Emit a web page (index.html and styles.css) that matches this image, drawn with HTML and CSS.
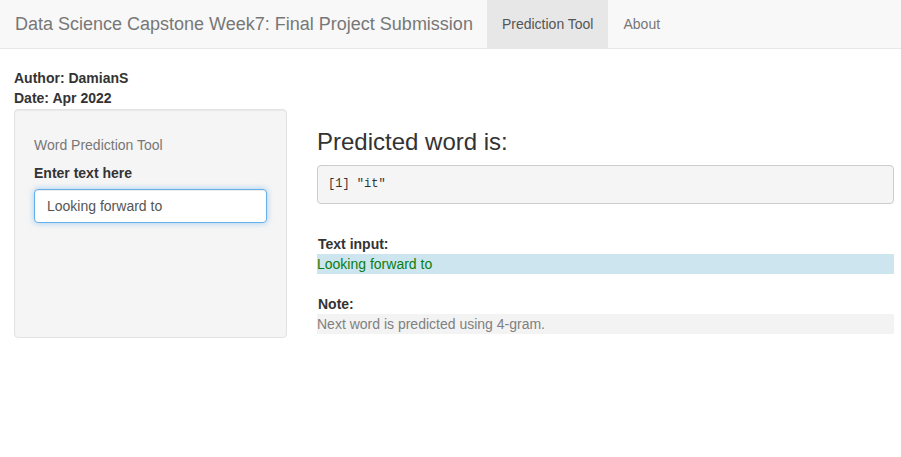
FILE: index.html
```html
<!DOCTYPE html>
<html>
<head>
<meta charset="utf-8">
<title>Data Science Capstone Week7</title>
<link rel="stylesheet" href="styles.css">
</head>
<body>
<nav class="navbar">
  <div class="brand">Data Science Capstone Week7: Final Project Submission</div>
  <ul class="nav">
    <li class="nav-item active">Prediction Tool</li>
    <li class="nav-item">About</li>
  </ul>
</nav>
<div class="page">
  <div class="meta">
    <div class="meta-line">Author: DamianS</div>
    <div class="meta-line">Date: Apr 2022</div>
  </div>
  <div class="row">
    <div class="well">
      <div class="well-title">Word Prediction Tool</div>
      <label class="control-label">Enter text here</label>
      <div class="input">Looking forward to</div>
    </div>
    <div class="main">
      <h3 class="heading">Predicted word is:</h3>
      <pre class="output">[1] "it"</pre>
      <div class="section section-first">
        <div class="section-label">Text input:</div>
        <div class="bar bar-blue">Looking forward to</div>
      </div>
      <div class="section">
        <div class="section-label">Note:</div>
        <div class="bar bar-grey">Next word is predicted using 4-gram.</div>
      </div>
    </div>
  </div>
</div>
</body>
</html>
```

FILE: styles.css
```css
* { box-sizing: border-box; }
html, body { margin: 0; padding: 0; background: #fff; }
body {
  font-family: "Liberation Sans", Arial, Helvetica, sans-serif;
  font-size: 14px;
  line-height: 20px;
  color: #333;
}
.navbar {
  display: flex;
  align-items: stretch;
  height: 49px;
  background: #f8f8f8;
  border-bottom: 1px solid #e7e7e7;
  padding-left: 15px;
}
.brand {
  font-size: 18px;
  line-height: 48px;
  color: #777;
  margin-right: 14px;
  white-space: nowrap;
}
.nav {
  display: flex;
  list-style: none;
  margin: 0;
  padding: 0;
}
.nav-item {
  padding: 0 15px;
  line-height: 48px;
  color: #777;
  font-size: 14px;
}
.nav-item.active {
  background: #e7e7e7;
  color: #555;
}
.page {
  padding: 19px 7px 0 14px;
}
.meta-line {
  font-weight: bold;
  line-height: 20px;
}
.row {
  display: grid;
  grid-template-columns: 273px 1fr;
  column-gap: 30px;
  align-items: start;
  margin-top: 1px;
}
.well {
  min-height: 229px;
  background: #f5f5f5;
  border: 1px solid #e3e3e3;
  border-radius: 4px;
  box-shadow: inset 0 1px 1px rgba(0,0,0,0.05);
  padding: 25px 19px 19px 19px;
}
.well-title {
  font-size: 14px;
  color: #777;
  line-height: 20px;
  margin-bottom: 8px;
}
.control-label {
  display: block;
  font-weight: bold;
  margin-bottom: 6px;
}
.input {
  height: 34px;
  background: #fff;
  border: 1px solid #66afe9;
  border-radius: 4px;
  box-shadow: inset 0 1px 1px rgba(0,0,0,0.075), 0 0 6px rgba(102,175,233,0.6);
  padding: 6px 12px;
  color: #555;
  line-height: 20px;
}
.main {
  padding-top: 20px;
}
.heading {
  font-size: 24px;
  font-weight: 500;
  line-height: 26px;
  margin: 0 0 10px 0;
  color: #333;
}
.output {
  margin: 0 0 10px 0;
  height: 39px;
  padding: 9px 10px;
  background: #f5f5f5;
  border: 1px solid #ccc;
  border-radius: 4px;
  font-family: "Liberation Mono", "DejaVu Sans Mono", monospace;
  font-size: 12px;
  line-height: 19px;
  color: #333;
}
.section {
  margin-top: 20px;
}
.section-first {
  margin-top: 30px;
}
.section-label {
  font-weight: bold;
  line-height: 20px;
  padding-left: 1px;
}
.bar {
  line-height: 20px;
  height: 20px;
}
.bar-blue {
  background: #cde5ee;
  color: #0a7d12;
}
.bar-grey {
  background: #f3f3f3;
  color: #808080;
}
```
